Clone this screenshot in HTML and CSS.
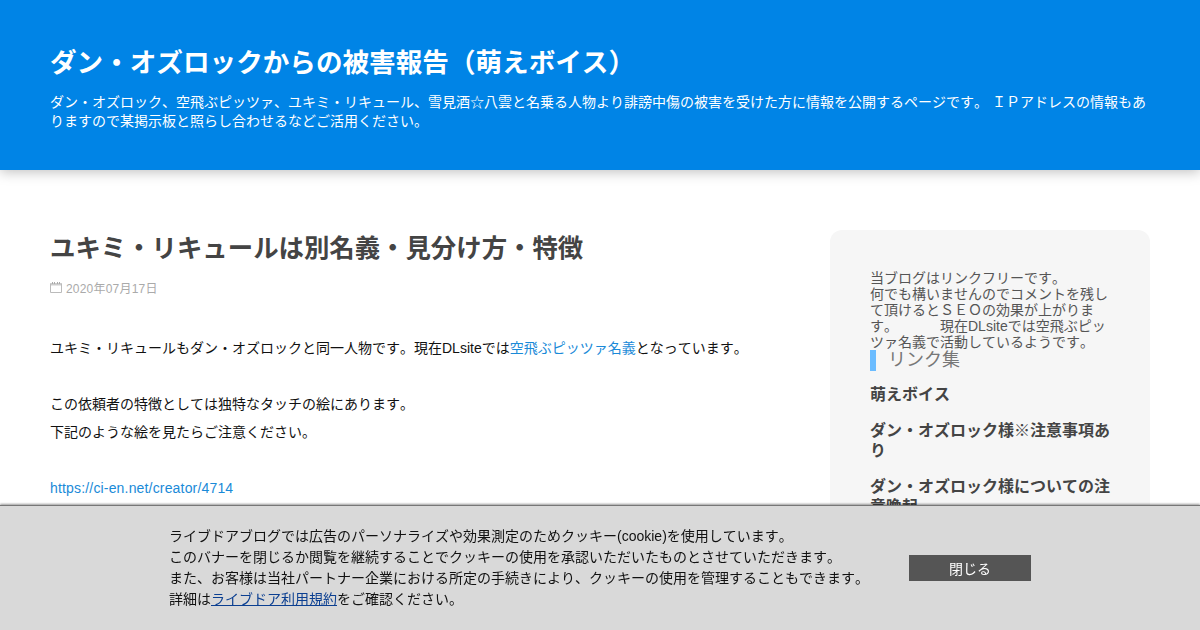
FILE: index.html
```html
<!DOCTYPE html>
<html lang="ja">
<head>
<meta charset="utf-8">
<title>ダン・オズロックからの被害報告（萌えボイス）</title>
<link rel="stylesheet" href="styles.css">
</head>
<body>
<header class="site-header">
  <h1 class="site-title">ダン・オズロックからの被害報告（萌えボイス）</h1>
  <p class="site-desc">ダン・オズロック、空飛ぶピッツァ、ユキミ・リキュール、雪見酒☆八雲と名乗る人物より誹謗中傷の被害を受けた方に情報を公開するページです。 ＩＰアドレスの情報もありますので某掲示板と照らし合わせるなどご活用ください。</p>
</header>
<main class="layout">
  <article class="article">
    <h2 class="article-title">ユキミ・リキュールは別名義・見分け方・特徴</h2>
    <div class="article-date">
      <svg class="cal" width="12" height="12" viewBox="0 0 12 12" aria-hidden="true"><path d="M.5 2.500h11v9H.5z" fill="none" stroke="#bbb"/><path d="M1 2h10v2.500H1z" fill="#ccc"/><path d="M2 1h1v2H2zM4 1h1v2H4zM7 1h1v2H7zM9 1h1v2H9z" fill="#aaa"/></svg>
      <span class="date-text">2020年07月17日</span>
    </div>
    <div class="article-body">
      <p class="para">ユキミ・リキュールもダン・オズロックと同一人物です。現在DLsiteでは<a href="#">空飛ぶピッツァ名義</a>となっています。</p>
      <p class="para">この依頼者の特徴としては独特なタッチの絵にあります。<br>下記のような絵を見たらご注意ください。</p>
      <p class="para"><a class="url" href="#">https://ci-en.net/creator/4714</a></p>
    </div>
  </article>
  <aside class="sidebar">
    <div class="side-text">当ブログはリンクフリーです。<br>何でも構いませんのでコメントを残して頂けるとＳＥＯの効果が上がります。　　　現在DLsiteでは空飛ぶピッツァ名義で活動しているようです。</div>
    <h3 class="side-heading">リンク集</h3>
    <ul class="side-links">
      <li>萌えボイス</li>
      <li>ダン・オズロック様※注意事項あり</li>
      <li>ダン・オズロック様についての注意喚起</li>
    </ul>
  </aside>
</main>
<div class="cookie">
  <div class="cookie-text">
    ライブドアブログでは広告のパーソナライズや効果測定のためクッキー(cookie)を使用しています。<br>
    このバナーを閉じるか閲覧を継続することでクッキーの使用を承認いただいたものとさせていただきます。<br>
    また、お客様は当社パートナー企業における所定の手続きにより、クッキーの使用を管理することもできます。<br>
    詳細は<a href="#">ライブドア利用規約</a>をご確認ください。
  </div>
  <button class="cookie-btn" type="button">閉じる</button>
</div>
</body>
</html>
```
FILE: styles.css
```css
* { box-sizing: border-box; }
html, body { margin: 0; padding: 0; height: 630px; overflow: hidden; }
body {
  background: #fff;
  color: #444;
  font-family: "Liberation Sans", "Noto Sans CJK JP", sans-serif;
  font-kerning: none;
  text-spacing-trim: space-all;
}
.site-header {
  height: 170px;
  padding: 44px 50px 0;
  background: #0084e6;
  color: #fff;
  box-shadow: 0 2px 12px rgba(0, 0, 0, .25);
}
.site-title { margin: 0; font-size: 26.6px; line-height: 38px; font-weight: bold; }
.site-desc { margin: 11px 0 0; font-size: 14px; line-height: 19px; }
.layout {
  display: flex;
  justify-content: space-between;
  padding: 60px 50px 0;
}
.article { width: 720px; }
.article-title { margin: 0; font-size: 25.4px; line-height: 36px; font-weight: bold; color: #444; }
.article-date {
  display: flex;
  align-items: center;
  gap: 4px;
  margin-top: 13px;
  height: 16px;
  font-size: 12px;
  color: #aaa;
}
.date-text { letter-spacing: .2px; }
.article-body { margin-top: 39px; font-size: 14px; line-height: 28px; color: #111; }
.para { margin: 0 0 28px; }
.article-body a { color: #1a8ad8; text-decoration: none; }
.article-body .url { letter-spacing: .17px; }
.sidebar {
  width: 320px;
  height: 400px;
  padding: 40px;
  background: #f6f6f6;
  border-radius: 12px;
}
.side-text { font-size: 14px; line-height: 16px; color: #555; }
.side-heading {
  margin: 0;
  padding-left: 12px;
  border-left: 6px solid #6bbcff;
  font-size: 18px;
  line-height: 21px;
  font-weight: normal;
  color: #777;
}
.side-links { list-style: none; margin: 14px 0 0; padding: 0; font-size: 16px; line-height: 20px; font-weight: bold; color: #444; }
.side-links li { margin-bottom: 16px; }
.cookie {
  position: fixed;
  left: 0;
  right: 0;
  bottom: 0;
  height: 125px;
  display: flex;
  align-items: center;
  padding: 0 0 0 169px;
  background: #d9d9d9;
  border-top: 1px solid #777;
  box-shadow: 0 -1px 2px rgba(0, 0, 0, .4);
}
.cookie-text { width: 740px; font-size: 14px; line-height: 21px; color: #111; }
.cookie-text a { color: #0b3f91; }
.cookie-btn {
  width: 122px;
  height: 26px;
  margin: 0;
  padding: 0;
  border: 0;
  background: #555;
  color: #fff;
  font: 14px "Liberation Sans", "Noto Sans CJK JP", sans-serif;
}
```
